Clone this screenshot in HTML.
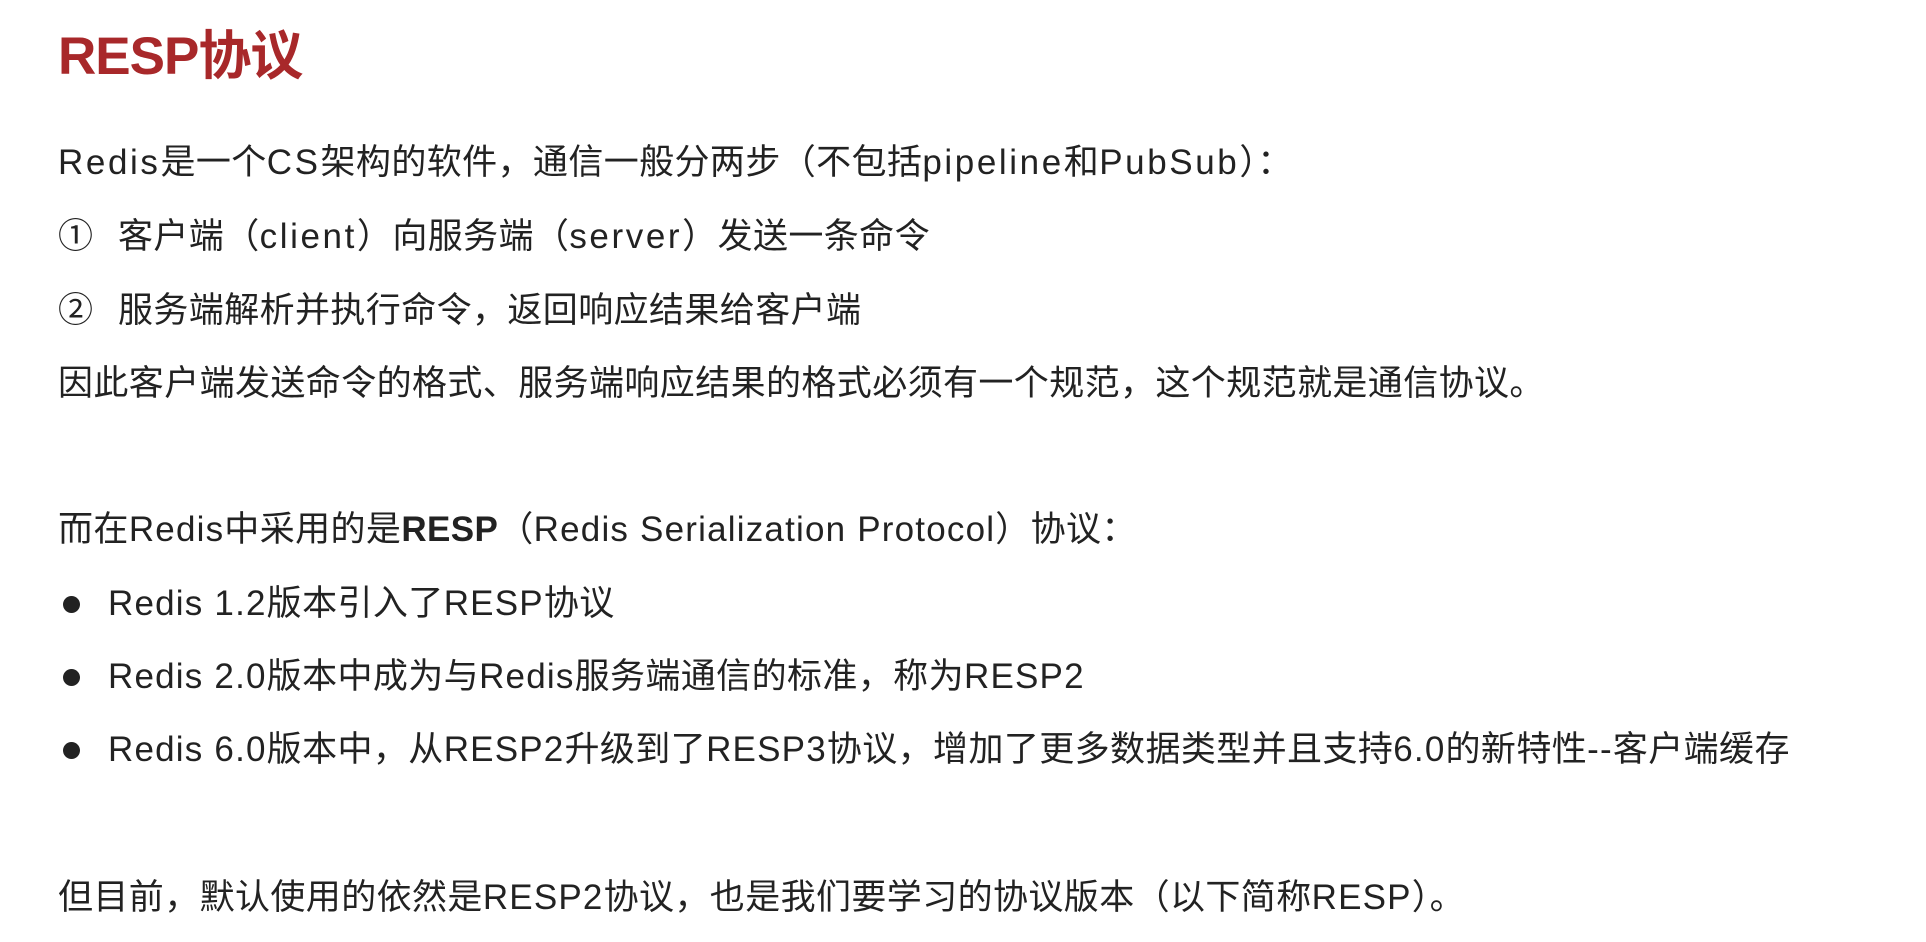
<!DOCTYPE html>
<html><head><meta charset="utf-8"><style>
html,body{margin:0;padding:0;background:#fff;width:1926px;height:942px;overflow:hidden}
body{font-family:"Liberation Sans","Noto Sans CJK SC",sans-serif;color:#222;position:relative}
.t{position:absolute;left:58px;top:22px;font-size:53px;font-weight:bold;color:#a8282a;line-height:70px;letter-spacing:-1px}
.l{position:absolute;left:58px;font-size:35px;line-height:40px;white-space:nowrap;letter-spacing:0.4px}
.l i{font-style:normal;letter-spacing:1.2px}
.l.w i{letter-spacing:2.6px}
.n{display:inline-block;width:60px}
.b{position:absolute;left:63px;width:17px;height:17px;border-radius:50%;background:#222}
</style></head><body>
<div class="t">RESP协议</div>
<div class="l w" style="top:143px"><i>Redis</i>是一个<i>CS</i>架构的软件，通信一般分两步（不包括<i>pipeline</i>和<i>PubSub</i>）：</div>
<div class="l w" style="top:217px"><span class="n">①</span>客户端（<i>client</i>）向服务端（<i>server</i>）发送一条命令</div>
<div class="l" style="top:291px"><span class="n">②</span>服务端解析并执行命令，返回响应结果给客户端</div>
<div class="l" style="top:364px">因此客户端发送命令的格式、服务端响应结果的格式必须有一个规范，这个规范就是通信协议。</div>
<div class="l" style="top:510px">而在<i>Redis</i>中采用的是<b>RESP</b>（<i>Redis Serialization Protocol</i>）协议：</div>
<div class="b" style="top:596px"></div><div class="l" style="top:584px;left:108px"><i>Redis 1.2</i>版本引入了<i>RESP</i>协议</div>
<div class="b" style="top:669px"></div><div class="l" style="top:657px;left:108px"><i>Redis 2.0</i>版本中成为与<i>Redis</i>服务端通信的标准，称为<i>RESP2</i></div>
<div class="b" style="top:742px"></div><div class="l" style="top:730px;left:108px"><i>Redis 6.0</i>版本中，从<i>RESP2</i>升级到了<i>RESP3</i>协议，增加了更多数据类型并且支持<i>6.0</i>的新特性<i>--</i>客户端缓存</div>
<div class="l" style="top:878px">但目前，默认使用的依然是<i>RESP2</i>协议，也是我们要学习的协议版本（以下简称<i>RESP</i>）。</div>
</body></html>
